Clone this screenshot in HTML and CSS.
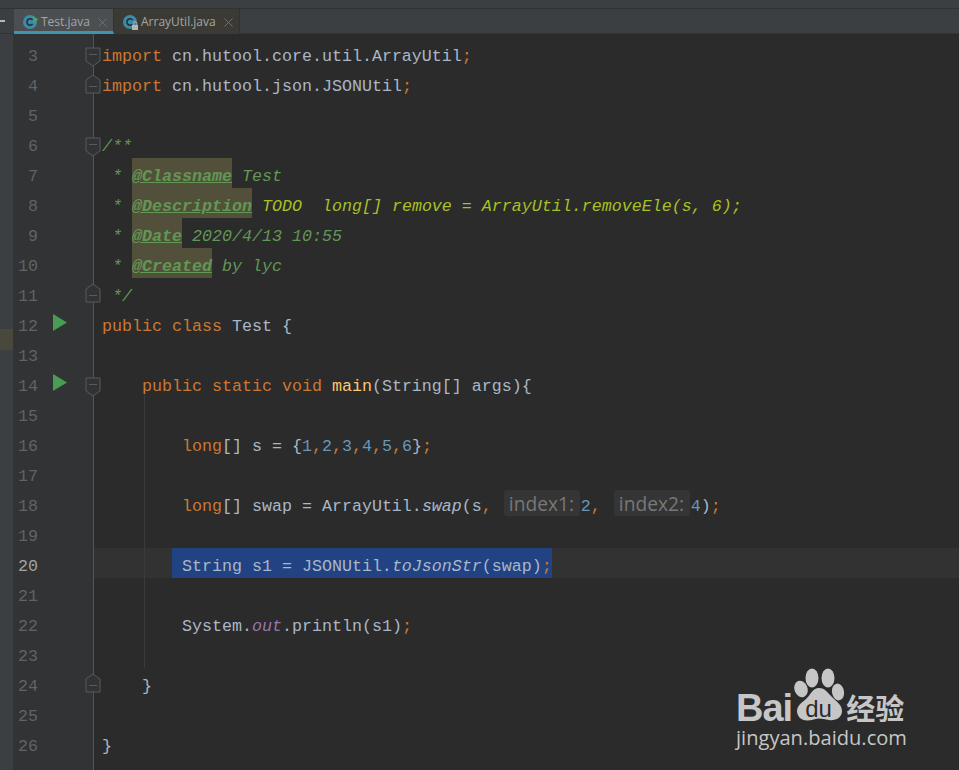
FILE: index.html
```html
<!DOCTYPE html>
<html lang="en">
<head>
<meta charset="utf-8">
<title>Test.java</title>
<link rel="stylesheet" href="styles.css">
</head>
<body>
<div class="ide">
  <div class="topbar"></div>
  <div class="tabbar">
    <div class="corner"><span class="dash"></span></div>
    <div class="tab active">
      <svg class="ficon" width="18" height="18" viewBox="0 0 18 18"><circle cx="8" cy="10" r="7" fill="#3d8ba8"/><path d="M10.600 8a3.200 3.200 0 1 0 0 4" fill="none" stroke="#2b2b2b" stroke-width="1.500"/><path d="M11 4l5.500 3.500L11 11z" fill="#4fa35a"/></svg>
      <span>Test.java</span><svg class="x" width="9" height="9" viewBox="0 0 9 9"><path d="M.5.5l8 8M8.500.5l-8 8"/></svg>
    </div>
    <div class="tab">
      <svg class="ficon" width="18" height="18" viewBox="0 0 18 18"><circle cx="8" cy="10" r="7" fill="#3d8ba8"/><path d="M10.600 8a3.200 3.200 0 1 0 0 4" fill="none" stroke="#2b2b2b" stroke-width="1.500"/><rect x="10" y="13" width="6" height="5" fill="#b5b5b5"/><path d="M11.200 13v-1.400a1.800 1.800 0 0 1 3.600 0V13" fill="none" stroke="#b5b5b5"/></svg>
      <span>ArrayUtil.java</span><svg class="x" width="9" height="9" viewBox="0 0 9 9"><path d="M.5.5l8 8M8.500.5l-8 8"/></svg>
    </div>
  </div>
  <div class="main">
    <div class="strip"><span class="mark"></span></div>
    <div class="editor">
      <div class="row partial"><div class="gutter"></div><div class="code"></div></div>

      <div class="row"><div class="gutter"><span class="num">3</span><svg class="fold fold-d" viewBox="0 0 16 20"><path d="M1 1h14v13l-7 5-7-5z"/><path d="M4 7.500h8"/></svg></div><div class="code"><span class="k">import</span> cn.hutool.core.util.ArrayUtil<span class="k">;</span></div></div>
      <div class="row"><div class="gutter"><span class="num">4</span><svg class="fold fold-u4" viewBox="0 0 16 20"><path d="M1 19h14V6L8 1 1 6z"/><path d="M4 12.500h8"/></svg></div><div class="code"><span class="k">import</span> cn.hutool.json.JSONUtil<span class="k">;</span></div></div>
      <div class="row"><div class="gutter"><span class="num">5</span></div><div class="code"></div></div>
      <div class="row"><div class="gutter"><span class="num">6</span><svg class="fold fold-d" viewBox="0 0 16 20"><path d="M1 1h14v13l-7 5-7-5z"/><path d="M4 7.500h8"/></svg></div><div class="code doc">/**</div></div>
      <div class="row"><div class="gutter"><span class="num">7</span></div><div class="code doc"> * <span class="tag">@Classname</span> Test</div></div>
      <div class="row"><div class="gutter"><span class="num">8</span></div><div class="code doc"> * <span class="tag">@Description</span> <span class="todo">TODO  long[] remove = ArrayUtil.removeEle(s, 6);</span></div></div>
      <div class="row"><div class="gutter"><span class="num">9</span></div><div class="code doc"> * <span class="tag">@Date</span> 2020/4/13 10:55</div></div>
      <div class="row"><div class="gutter"><span class="num">10</span></div><div class="code doc"> * <span class="tag">@Created</span> by lyc</div></div>
      <div class="row"><div class="gutter"><span class="num">11</span><svg class="fold fold-u" viewBox="0 0 16 20"><path d="M1 19h14V6L8 1 1 6z"/><path d="M4 12.500h8"/></svg></div><div class="code doc"> */</div></div>
      <div class="row"><div class="gutter"><span class="num">12</span><svg class="run" viewBox="0 0 14 17"><path d="M0 0l14 8.500L0 17z"/></svg></div><div class="code"><span class="k">public class</span> Test {</div></div>
      <div class="row"><div class="gutter"><span class="num">13</span></div><div class="code"></div></div>
      <div class="row"><div class="gutter"><span class="num">14</span><svg class="run" viewBox="0 0 14 17"><path d="M0 0l14 8.500L0 17z"/></svg><svg class="fold fold-d" viewBox="0 0 16 20"><path d="M1 1h14v13l-7 5-7-5z"/><path d="M4 7.500h8"/></svg></div><div class="code">    <span class="k">public static void</span> <span class="m">main</span>(String[] args){</div></div>
      <div class="row"><div class="gutter"><span class="num">15</span></div><div class="code"></div></div>
      <div class="row"><div class="gutter"><span class="num">16</span></div><div class="code">        <span class="k">long</span>[] s = {<span class="n">1</span><span class="k">,</span><span class="n">2</span><span class="k">,</span><span class="n">3</span><span class="k">,</span><span class="n">4</span><span class="k">,</span><span class="n">5</span><span class="k">,</span><span class="n">6</span>}<span class="k">;</span></div></div>
      <div class="row"><div class="gutter"><span class="num">17</span></div><div class="code"></div></div>
      <div class="row"><div class="gutter"><span class="num">18</span></div><div class="code">        <span class="k">long</span>[] swap = ArrayUtil.<i>swap</i>(s<span class="k">,</span> <span class="hint hint-a">index1:</span><span class="n">2</span><span class="k">,</span> <span class="hint hint-b">index2:</span><span class="n">4</span>)<span class="k">;</span></div></div>
      <div class="row"><div class="gutter"><span class="num">19</span></div><div class="code"></div></div>
      <div class="row caret"><div class="gutter"><span class="num">20</span></div><div class="code">       <span class="sel"> String s1 = JSONUtil.<i>toJsonStr</i>(swap)<span class="k">;</span></span></div></div>
      <div class="row"><div class="gutter"><span class="num">21</span></div><div class="code"></div></div>
      <div class="row"><div class="gutter"><span class="num">22</span></div><div class="code">        System.<i class="f">out</i>.println(s1)<span class="k">;</span></div></div>
      <div class="row"><div class="gutter"><span class="num">23</span></div><div class="code"></div></div>
      <div class="row"><div class="gutter"><span class="num">24</span><svg class="fold fold-u" viewBox="0 0 16 20"><path d="M1 19h14V6L8 1 1 6z"/><path d="M4 12.500h8"/></svg></div><div class="code">    }</div></div>
      <div class="row"><div class="gutter"><span class="num">25</span></div><div class="code"></div></div>
      <div class="row"><div class="gutter"><span class="num">26</span></div><div class="code">}</div></div>
      <div class="row"><div class="gutter"></div><div class="code"></div></div>

      <span class="guide"></span>
    </div>
  </div>
</div>
<div class="watermark">
  <div class="wm-top">
    <span class="wm-bai">Bai</span>
    <div class="wm-paw">
      <svg width="50" height="54" viewBox="0 0 50 54"><ellipse cx="18" cy="10" rx="6.500" ry="9.500" fill="#c6c6c6"/><ellipse cx="34" cy="10" rx="6.500" ry="9.500" fill="#c6c6c6"/><ellipse cx="7" cy="21" rx="6.500" ry="8.500" fill="#c6c6c6" transform="rotate(-20 7 21)"/><ellipse cx="44" cy="24" rx="6" ry="8.500" fill="#c6c6c6" transform="rotate(-10 44 24)"/><path d="M25 20c6 0 9 5 13 9 5 5 10 8 10 14 0 7-7 10-13 9-4-.5-7-1.500-10-1.500s-7 2-12 2C7 52.500 3 48 3 43c0-6 6-9 10-13 4-4 6-10 12-10z" fill="#c6c6c6"/></svg>
      <span class="wm-du">du</span>
    </div>
    <span class="wm-cn">经验</span>
  </div>
  <div class="wm-url">jingyan.baidu.com</div>
</div>
</body>
</html>
```
FILE: styles.css
```css
html, body {
  margin: 0;
  padding: 0;
  background: #2b2b2b;
}
body {
  width: 959px;
  height: 770px;
  overflow: hidden;
  position: relative;
}
.ide {
  display: flex;
  flex-direction: column;
  height: 770px;
}
.topbar {
  height: 9px;
  background: #3c3f41;
  border-bottom: 1px solid #323232;
  box-sizing: border-box;
}
.tabbar {
  display: flex;
  height: 25px;
  background: #3c3f41;
  font-family: "Open Sans", "Liberation Sans", sans-serif;
  font-size: 12px;
  line-height: 20px;
  color: #a4a6a8;
  box-shadow: inset 0 -1px 0 #323232;
}
.corner {
  width: 14px;
  box-sizing: border-box;
  padding-top: 11px;
}
.dash {
  display: block;
  width: 5px;
  height: 2px;
  background: #b8b8b8;
}
.tab {
  display: flex;
  align-items: flex-start;
  box-sizing: border-box;
  height: 25px;
  width: 126px;
  padding: 3px 0 0 8px;
  background: #3c3a35;
  border-right: 1px solid #323232;
}
.tab.active {
  width: 100px;
  background: #4b4f51;
  border-bottom: 3px solid #3d95b3;
}
.ficon {
  margin-right: 1px;
  flex: none;
}
.x {
  margin: 6px 0 0 8px;
  flex: none;
  fill: none;
  stroke: #6e7072;
  stroke-width: 1;
}
.main {
  flex: 1;
  display: flex;
  min-height: 0;
}
.strip {
  width: 13px;
  background: #3c3f41;
  position: relative;
}
.mark {
  position: absolute;
  left: 0;
  top: 295px;
  width: 13px;
  height: 21px;
  background: #4a473c;
}
.editor {
  flex: 1;
  position: relative;
  overflow: hidden;
}
.row {
  display: flex;
  height: 30px;
}
.row.partial {
  height: 4px;
}
.gutter {
  position: relative;
  flex: none;
  width: 80px;
  background: #313335;
  border-right: 1px solid #555555;
  font: 16.670px/38px "Liberation Mono", monospace;
  color: #606366;
}
.num {
  position: absolute;
  right: 55px;
  top: 0;
}
.caret .num {
  color: #a4a3a3;
}
.fold {
  position: absolute;
  left: 72px;
  width: 16px;
  height: 20px;
  fill: #313335;
  stroke: #5a5a5a;
  stroke-width: 1;
}
.fold-d { top: 9px; }
.fold-u4 { top: 6px; }
.fold-u { top: 5px; }
.run {
  position: absolute;
  left: 40px;
  top: 6px;
  width: 14px;
  height: 17px;
  fill: #499c54;
}
.code {
  flex: 1;
  padding-left: 8px;
  font: 16.670px/38px "Liberation Mono", monospace;
  color: #a9b7c6;
  white-space: pre;
}
.caret .code {
  background: #323232;
}
.k { color: #cc7832; }
.m { color: #ffc66d; }
.n { color: #6897bb; }
.f { color: #9876aa; }
.doc {
  color: #629755;
  font-style: italic;
}
.tag {
  display: inline-block;
  height: 30px;
  background: #52503a;
  text-decoration: underline;
  font-weight: bold;
  vertical-align: top;
}
.todo {
  color: #a8c023;
}
.sel {
  display: inline-block;
  height: 30px;
  background: #214283;
  vertical-align: top;
}
.hint {
  display: inline-block;
  box-sizing: border-box;
  width: 76px;
  height: 26px;
  padding-left: 5px;
  margin-right: 1px;
  border-radius: 3px;
  background: #353535;
  color: #787878;
  font: 19.200px/28px "Open Sans", "Liberation Sans", sans-serif;
  vertical-align: top;
  margin-top: 2px;
}
.hint-a { margin-left: 2px; }
.hint-b { margin-left: 3px; }
.guide {
  position: absolute;
  left: 131px;
  top: 361px;
  width: 1px;
  height: 273px;
  background: #3b3b3b;
}
.watermark {
  position: absolute;
  left: 736px;
  top: 668px;
  color: #c6c6c6;
  font-family: "Liberation Sans", "Noto Sans CJK SC", sans-serif;
}
.wm-top {
  display: flex;
  align-items: flex-start;
  height: 58px;
}
.wm-bai {
  font-size: 38px;
  line-height: 30px;
  letter-spacing: -1px;
  font-weight: bold;
  margin: 25px 2px 0 0;
}
.wm-paw {
  position: relative;
  width: 50px;
  height: 54px;
  flex: none;
}
.wm-du {
  position: absolute;
  left: 11px;
  top: 29px;
  color: #2b2b2b;
  font-size: 24px;
  line-height: 24px;
}
.wm-cn {
  font-family: "Noto Sans CJK SC", sans-serif;
  font-size: 29px;
  line-height: 30px;
  font-weight: bold;
  margin: 24px 0 0 2px;
}
.wm-url {
  font-family: "Open Sans", "Liberation Sans", sans-serif;
  font-size: 20.100px;
  line-height: 24px;
  white-space: nowrap;
}
```
